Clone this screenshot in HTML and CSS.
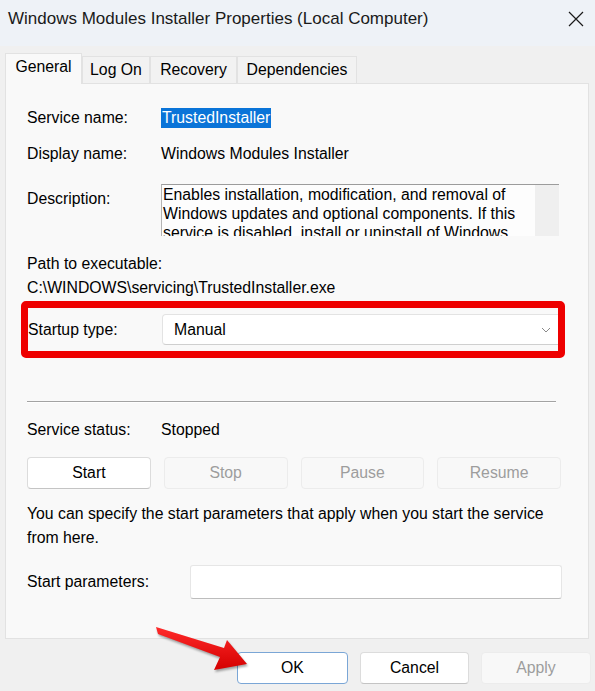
FILE: index.html
```html
<!DOCTYPE html>
<html lang="en">
<head>
    <meta charset="UTF-8">
    <meta name="viewport" content="width=device-width, initial-scale=1.0">
    <title>Windows Modules Installer Properties</title>
    <link rel="stylesheet" href="styles.css">
</head>
<body>

<div class="window">
    <div class="titlebar">
        <span class="title">Windows Modules Installer Properties (Local Computer)</span>
        <svg class="close" width="16" height="16" viewBox="0 0 16 16">
            <path d="M1 1 L15 15 M15 1 L1 15" stroke="#1a1a1a" stroke-width="1.2" fill="none"/>
        </svg>
    </div>

    <div class="tabs">
        <div class="tab active">General</div>
        <div class="tab">Log On</div>
        <div class="tab">Recovery</div>
        <div class="tab">Dependencies</div>
    </div>

    <div class="panel">
        <div class="row row-first">
            <span class="label">Service name:</span>
            <span class="selected">TrustedInstaller</span>
        </div>
        <div class="row row-display">
            <span class="label">Display name:</span>
            <span>Windows Modules Installer</span>
        </div>
        <div class="row row-desc">
            <span class="label label-desc">Description:</span>
            <div class="desc-box">
                <div class="desc-text">Enables installation, modification, and removal of<br>Windows updates and optional components. If this<br>service is disabled, install or uninstall of Windows</div>
                <div class="scroll-track"></div>
            </div>
        </div>
        <div class="path">
            <div>Path to executable:</div>
            <div>C:\WINDOWS\servicing\TrustedInstaller.exe</div>
        </div>

        <div class="highlight">
            <span class="label label-startup">Startup type:</span>
            <div class="combo">
                <span>Manual</span>
                <svg class="chevron" width="10" height="6" viewBox="0 0 10 6">
                    <path d="M1 1 L5 5 L9 1" stroke="#8a8a8a" stroke-width="1" fill="none"/>
                </svg>
            </div>
        </div>

        <div class="separator"></div>

        <div class="row row-status">
            <span class="label">Service status:</span>
            <span>Stopped</span>
        </div>

        <div class="service-buttons">
            <button class="btn">Start</button>
            <button class="btn disabled">Stop</button>
            <button class="btn disabled">Pause</button>
            <button class="btn disabled">Resume</button>
        </div>

        <p class="hint">You can specify the start parameters that apply when you start the service<br>from here.</p>

        <div class="row row-params">
            <span class="label label-params">Start parameters:</span>
            <div class="params-input"></div>
        </div>
    </div>

    <div class="footer">
        <button class="btn btn-ok">OK</button>
        <button class="btn btn-cancel">Cancel</button>
        <button class="btn btn-apply disabled">Apply</button>
    </div>
</div>

<svg class="arrow" width="120" height="70" viewBox="140 610 120 70">
    <defs>
        <linearGradient id="arrowFill" x1="0" y1="0" x2="0" y2="1">
            <stop offset="0" stop-color="#ff2a2a"/>
            <stop offset="1" stop-color="#d40000"/>
        </linearGradient>
    </defs>
    <polygon points="156,627 224,648 227,640 247,664 214,670 220,657 158,634"
             fill="url(#arrowFill)"/>
</svg>

</body>
</html>
```

FILE: styles.css
```css
body {
    margin: 0;
    padding: 0;
    font-family: "Liberation Sans", Arial, sans-serif;
    font-size: 15.8px;
    color: #000;
    background-color: #f0f0f0;
}
.window {
    width: 595px;
    height: 691px;
    background-color: #f0f0f0;
    overflow: hidden;
}
.titlebar {
    height: 46px;
    background-color: #eef2f7;
    display: flex;
    align-items: center;
    justify-content: space-between;
    padding: 0 10px 8px 8px;
    box-sizing: border-box;
}
.title {
    font-size: 17px;
    color: #1a1a1a;
}
.close {
    margin-right: 1px;
}
.tabs {
    display: flex;
    align-items: flex-end;
    height: 37px;
    padding-left: 5px;
    box-sizing: border-box;
}
.tab {
    height: 27px;
    padding: 0;
    display: flex;
    align-items: center;
    justify-content: center;
    white-space: nowrap;
    background-color: #f2f2f2;
    border: 1px solid #e2e2e2;
    border-bottom: none;
    box-sizing: border-box;
    font-size: 15.8px;
}
.tab:nth-child(2) { width: 68px; }
.tab:nth-child(3) { width: 87px; }
.tab:nth-child(4) { width: 120px; }
.tab.active {
    width: 77px;
    height: 31px;
    background-color: #f9f9f9;
    padding-bottom: 5px;
    margin-bottom: -1px;
    position: relative;
    z-index: 1;
}
.panel {
    margin: 0 6px 0 5px;
    height: 556px;
    background-color: #f9f9f9;
    border: 1px solid #e2e2e2;
    box-sizing: border-box;
    padding: 24px 0 0 21px;
}
.row {
    display: flex;
    align-items: center;
    height: 20px;
}
.label {
    width: 134px;
    flex-shrink: 0;
}
.selected {
    background-color: #0a74d8;
    color: #fff;
    line-height: 20px;
    padding: 0 1px;
}
.row-display {
    margin-top: 16px;
}
.row-desc {
    margin-top: 20px;
    height: 52px;
    align-items: flex-start;
}
.label-desc {
    padding-top: 6px;
}
.desc-box {
    width: 398px;
    height: 52px;
    display: flex;
    background-color: #fdfdfd;
    border-top: 1px solid #9c9c9c;
    border-left: 1px solid #b4b4b4;
    box-sizing: border-box;
    overflow: hidden;
}
.desc-text {
    flex: 1;
    line-height: 19px;
    padding-left: 1px;
    white-space: nowrap;
}
.scroll-track {
    width: 24px;
    background-color: #efefef;
}
.path {
    margin-top: 16px;
    line-height: 24px;
}
.highlight {
    margin: 1px 0 0 -6px;
    width: 544px;
    height: 57px;
    border: 7px solid #ee0000;
    border-radius: 5px;
    box-sizing: border-box;
    display: flex;
    align-items: center;
    overflow: hidden;
}
.label-startup {
    padding-left: 0;
}
.combo {
    flex-shrink: 0;
    width: 400px;
    height: 31px;
    background-color: #fff;
    border: 1px solid #e3e3e3;
    border-bottom-color: #cfcfcf;
    border-radius: 4px;
    box-sizing: border-box;
    display: flex;
    align-items: center;
    justify-content: space-between;
    padding: 0 10px 0 11px;
}
.separator {
    width: 529px;
    margin-top: 43px;
    border-top: 1px solid #a3a3a3;
    border-bottom: 1px solid #ffffff;
}
.row-status {
    margin-top: 17px;
}
.service-buttons {
    display: flex;
    gap: 13px;
    width: 534px;
    margin-top: 17px;
}
.btn {
    font-family: "Liberation Sans", Arial, sans-serif;
    font-size: 15.8px;
    color: #000;
    background-color: #fff;
    border: 1px solid #dcdcdc;
    border-bottom-color: #c4c4c4;
    border-radius: 4px;
    height: 32px;
    padding: 0;
}
.service-buttons .btn {
    flex: 1;
}
.btn.disabled {
    background-color: #f8f8f8;
    border-color: #ececec;
    color: #9d9d9d;
}
.hint {
    margin: 13px 0 0 0;
    line-height: 24px;
}
.row-params {
    margin-top: 15px;
    height: 34px;
}
.label-params {
    width: 163px;
}
.params-input {
    width: 372px;
    height: 34px;
    background-color: #fff;
    border: 1px solid #e6e6e6;
    border-bottom-color: #bdbdbd;
    border-radius: 3px;
    box-sizing: border-box;
}
.footer {
    display: flex;
    justify-content: flex-end;
    gap: 12px;
    padding: 13px 4px 0 0;
}
.btn-ok {
    width: 111px;
    border-color: #7aa6d6;
}
.btn-cancel {
    width: 109px;
}
.btn-apply {
    width: 110px;
}
.arrow {
    position: absolute;
    left: 140px;
    top: 610px;
    filter: drop-shadow(1px 2px 1px rgba(0, 0, 0, 0.35));
}
```
